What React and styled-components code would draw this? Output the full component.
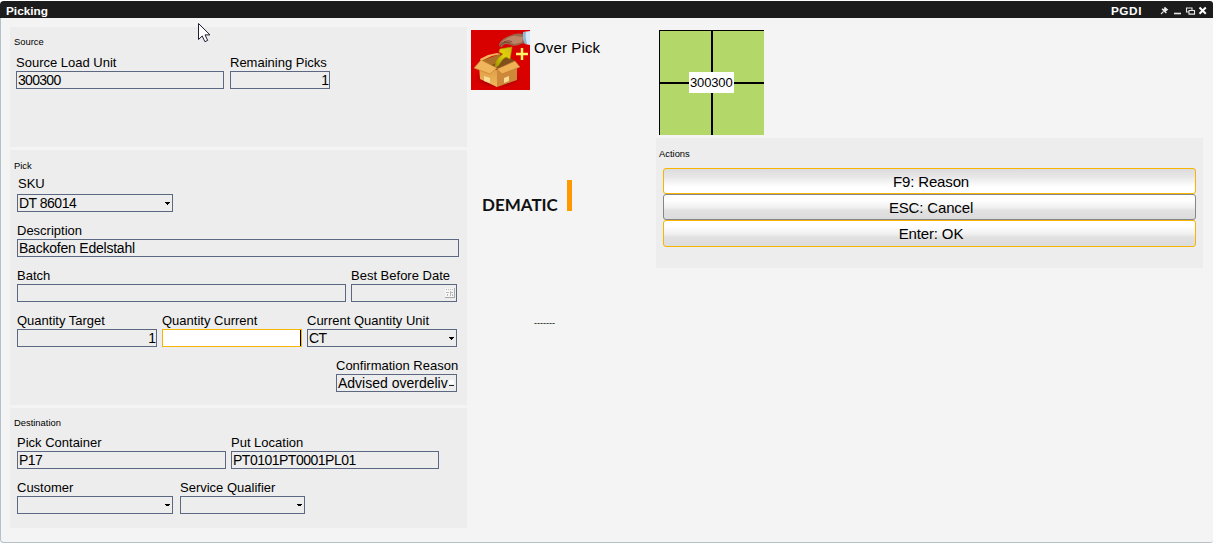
import React from "react";
import styled, { createGlobalStyle } from "styled-components";

const Global = createGlobalStyle`
  * { box-sizing: border-box; }
  html, body { margin: 0; height: 100%; overflow: hidden; background: #fff; }
  body { font-family: "Liberation Sans", Arial, sans-serif; color: #000; }
`;

const Window = styled.div`
  width: 1213px;
  height: 543px;
  padding-top: 1px;
  display: flex;
  flex-direction: column;
`;

const TitleBar = styled.header`
  height: 17px;
  flex: none;
  display: flex;
  align-items: center;
  padding: 3px 5px 0 6px;
  background: #1c1c1c;
  color: #fff;
  border-radius: 4px 3px 0 0;
  font-size: 11.8px;
  font-weight: bold;
  line-height: 14px;
`;

const Title = styled.span`
  flex: 1;
`;

const Station = styled.span`
  letter-spacing: 0.55px;
  margin-right: 18px;
`;

const Body = styled.main`
  flex: 1;
  display: flex;
  align-items: flex-start;
  padding: 9px 9px 0 9px;
  background: #f4f4f4;
  border: solid #b3c1c9;
  border-width: 0 0 1px 1px;
  border-radius: 0 0 3px 4px;
`;

const Column = styled.section`
  display: flex;
  flex-direction: column;
  gap: 3px;
  width: 457px;
`;

const Panel = styled.section`
  height: ${(p) => p.$height}px;
  padding: ${(p) => p.$top || 9}px 7px 0;
  background: #ededed;
`;

const Legend = styled.h2`
  margin: 0 0 ${(p) => p.$gap ?? 6}px ${(p) => p.$indent ?? -3}px;
  font-size: 9.4px;
  font-weight: normal;
  line-height: 12px;
`;

const FieldRow = styled.div`
  display: flex;
  gap: ${(p) => p.$gap ?? 5}px;
  margin-bottom: 11px;
  margin-left: ${(p) => p.$indent || 0}px;
`;

const FieldBlock = styled.label`
  width: ${(p) => p.$width}px;
  display: block;
`;

const Caption = styled.span`
  display: block;
  font-size: 13px;
  line-height: 15px;
  white-space: nowrap;
  padding-left: ${(p) => p.$indent || 0}px;
  margin-bottom: ${(p) => p.$gap ?? 1}px;
`;

const Box = styled.span`
  display: flex;
  align-items: center;
  justify-content: ${(p) => (p.$number ? "flex-end" : "space-between")};
  height: 18px;
  padding: 0 ${(p) => (p.$number ? 0 : 1)}px 0 1px;
  border: 1px solid ${(p) => (p.$active ? "#f7b500" : "#5c6882")};
  background: ${(p) => (p.$active ? "#fff" : "#ededed")};
  font-size: 14px;
  line-height: 16px;
  letter-spacing: ${(p) => p.$spacing || 0}px;
  white-space: nowrap;
`;

const Caret = styled.i`
  width: 1px;
  height: 16px;
  margin-left: auto;
  margin-right: -1px;
  background: #000;
`;

const Dash = styled.i`
  width: 5px;
  height: 7px;
  margin-right: 1px;
  background: linear-gradient(#fff 4px, #ededed 4px, #ededed 5px, #222 5px, #222 6px, #ededed 6px);
`;

const Middle = styled.section`
  width: 189px;
  padding: 3px 0 0 4px;
`;

const Mode = styled.div`
  display: flex;
  gap: 4px;
  font-size: 15px;
  line-height: 18px;
  letter-spacing: 0.13px;
`;

const ModeName = styled.span`
  padding-top: 9px;
`;

const Logo = styled.div`
  display: flex;
  align-items: flex-end;
  justify-content: space-between;
  width: 90px;
  height: 31px;
  margin: 90px 0 0 11px;
  font-family: Lato, sans-serif;
  font-size: 17px;
  font-weight: 700;
  line-height: 13px;
  color: #111;
`;

const LogoBar = styled.i`
  width: 5px;
  height: 31px;
  background: #ff9900;
`;

const Status = styled.div`
  margin: 106px 0 0 63px;
  font-size: 9px;
  line-height: 12px;
`;

const Right = styled.section`
  width: 547px;
  padding-top: 3px;
`;

const LoadGrid = styled.div`
  display: grid;
  grid-template: 51px 51px / 51px 51px;
  gap: 2px;
  width: 105px;
  height: 105px;
  margin: 0 0 3px 3px;
  padding: 0;
  border: 1px solid #000;
  background: #000;
  position: relative;
`;

const Cell = styled.div`
  background: #b4d76a;
`;

const GridLabel = styled.span`
  position: absolute;
  left: 29px;
  top: 41px;
  width: 45px;
  height: 21px;
  background: #fff;
  font-size: 13px;
  line-height: 22px;
  letter-spacing: -0.15px;
  padding-left: 1px;
`;

const ActionList = styled.div`
  display: flex;
  flex-direction: column;
`;

const Action = styled.button`
  height: ${(p) => p.$height || 26}px;
  padding: 1px 0 0 3px;
  border: 1px solid ${(p) => (p.$plain ? "#858585" : "#f7b500")};
  border-radius: 3px;
  background: ${(p) =>
    p.$pressed
      ? "linear-gradient(#dcdcdc 0%, #e6e6e6 30%, #fff 75%)"
      : "linear-gradient(#fff 20%, #f0f0f0 52%, #e1e1e1 65%, #dcdcdc 100%)"};
  color: #000;
  font: 15px/18px "Liberation Sans", Arial, sans-serif;
  letter-spacing: -0.15px;
`;

const Pointer = styled.svg`
  position: absolute;
  left: 197px;
  top: 22px;
`;

const Arrow = ({ small }) => (
  <svg width="7" height="6" viewBox="0 0 7 6" shapeRendering="crispEdges">
    <path d={small ? "M1 2h5v1h-1v1h-3v-1h-1z" : "M1 2h5v1h-1v1h-1v1h-1v-1h-1v-1h-1z"} fill="#000" />
  </svg>
);

const CalendarIcon = () => (
  <svg width="10" height="10" viewBox="0 0 10 10" shapeRendering="crispEdges">
    <path d="M0 0h9v9h-9z" fill="#f5f5f5" />
    <path d="M9 0h1v10h-10v-1h9z" fill="#a8a8a8" />
    <path d="M1 1h1v1h-1zM3 1h1v1h-1zM5 1h1v1h-1zM7 1h1v1h-1zM1 4h3v1h-3zM5 3h1v5h-1zM6 4h2v1h-2zM2 6h1v2h-1zM7 6h1v2h-1z" fill="#b9b9b9" />
  </svg>
);

const WindowIcons = () => (
  <svg width="48" height="12" viewBox="0 0 48 12">
    <g fill="none" stroke="#e8e8e8">
      <path d="M1 9l2.6-2.6" strokeWidth="1.1" />
      <path d="M2 3.8l4.3 4.3" strokeWidth="1.4" />
      <path d="M3.2 4.6l2-1.8 2 2-1.8 2z" fill="#e8e8e8" strokeWidth=".8" />
      <path d="M4.5 2.2l3.4 3" strokeWidth="1.1" />
      <path d="M14 8.5h7" strokeWidth="1.6" />
      <path d="M26.5 3h5.5v4h-5.5z" strokeWidth="1.1" />
      <path d="M29 5.5h5.5v3.6h-5.5z" fill="#1c1c1c" strokeWidth="1.1" />
      <path d="M39.5 2.5l6.3 6.3M45.8 2.5l-6.3 6.3" strokeWidth="2" stroke="#fff" />
    </g>
  </svg>
);

const OverPickIcon = () => (
  <svg width="59" height="60" viewBox="0 0 59 60">
    <defs>
      <linearGradient id="front" x1="0" y1="0" x2="0" y2="1">
        <stop offset="0" stopColor="#dc9b43" />
        <stop offset="1" stopColor="#eeb65c" />
      </linearGradient>
      <linearGradient id="arrow" x1="0" y1="1" x2="1" y2="0">
        <stop offset="0" stopColor="#9d9200" />
        <stop offset=".55" stopColor="#e2d00e" />
        <stop offset="1" stopColor="#cebb09" />
      </linearGradient>
      <radialGradient id="glow">
        <stop offset=".55" stopColor="#8d0000" stopOpacity=".8" />
        <stop offset="1" stopColor="#d60000" stopOpacity="0" />
      </radialGradient>
    </defs>
    <path d="M0 0h59v60h-59z" fill="#d90000" />
    <ellipse cx="27" cy="48" rx="25" ry="11" fill="url(#glow)" />
    <path d="M10 31l19-7 16 7-19 9z" fill="#80501c" />
    <path d="M10 31l19-7v8l-9 3z" fill="#ad7027" />
    <path d="M8 35l18 5v17l-17-8z" fill="url(#front)" />
    <path d="M26 40l20-6v16l-20 7z" fill="#cd8939" />
    <path d="M10 30l-7 8 16 6 7-6z" fill="#f0b65d" stroke="#c67d2c" strokeWidth=".6" />
    <path d="M26 39l18-8 5 6-18 7z" fill="#eeb156" stroke="#bd752a" strokeWidth=".6" />
    <path d="M10 31l11-5 9-2-4-1-9 2-8 4z" fill="#f0b55b" />
    <path d="M13 46l6 2v5l-6-2zM33 48l5-2v5l-5 2z" fill="#f7dc98" />
    <path d="M24 37c1-7 4-10 8-13l-4-2 1-3 12-2-2 12-4-2c-4 2-5 5-8 9z" fill="url(#arrow)" stroke="#ada100" strokeWidth=".6" />
    <path d="M28 16c0-5 5-8 10-10 6-3 10-3 15-2v9c-6 2-9 4-13 2-4-1-7-2-9 2z" fill="#9c684b" />
    <path d="M31 12c5-4 9-6 13-6l8 1-1 5-7 2-6-2z" fill="#bd8767" />
    <path d="M29 16c2-3 5-5 10-3M33 12c4-2 6-1 8 0" fill="none" stroke="#6d3926" strokeWidth=".9" />
    <path d="M52 2l7-1v14l-5-1c-2-4-2-8-2-12z" fill="#d5e8f4" />
    <path d="M52 2l3 0c-1 4 0 8 1 12l-2 0c-2-4-2-8-2-12z" fill="#8fb6d2" />
    <path d="M45 24h12M51 18v12" stroke="#fff36a" strokeWidth="2.5" />
  </svg>
);

const Field = ({ label, width, value, spacing, number, select, small, active, date, dash, captionIndent, captionGap }) => (
  <FieldBlock $width={width}>
    <Caption $indent={captionIndent} $gap={captionGap}>{label}</Caption>
    <Box $number={number} $spacing={spacing} $active={active}>
      <span>{value}</span>
      {select && <Arrow small={small} />}
      {date && <CalendarIcon />}
      {dash && <Dash />}
      {active && <Caret />}
    </Box>
  </FieldBlock>
);

export default function App() {
  return (
    <>
      <Global />
      <Window>
        <TitleBar>
          <Title>Picking</Title>
          <Station>PGDI</Station>
          <WindowIcons />
        </TitleBar>
        <Body>
          <Column>
            <Panel $height={120}>
              <Legend $indent={-3} $gap={7}>Source</Legend>
              <FieldRow $gap={6} $indent={-1}>
                <Field label="Source Load Unit" width={208} value="300300" spacing={-0.7} />
                <Field label="Remaining Picks" width={100} value="1" number />
              </FieldRow>
            </Panel>
            <Panel $height={255} $top={10}>
              <Legend $gap={4}>Pick</Legend>
              <FieldRow>
                <Field label="SKU" width={156} value="DT 86014" spacing={-0.5} select captionIndent={1} captionGap={3} />
              </FieldRow>
              <FieldRow $gap={0}>
                <Field label="Description" width={442} value="Backofen Edelstahl" spacing={-0.22} />
              </FieldRow>
              <FieldRow>
                <Field label="Batch" width={329} />
                <Field label="Best Before Date" width={106} date />
              </FieldRow>
              <FieldRow>
                <Field label="Quantity Target" width={140} value="1" number />
                <Field label="Quantity Current" width={140} active />
                <Field label="Current Quantity Unit" width={150} value="CT" spacing={-0.5} select />
              </FieldRow>
              <FieldRow $indent={319}>
                <Field label="Confirmation Reason" width={121} value="Advised overdeliv" dash />
              </FieldRow>
            </Panel>
            <Panel $height={120}>
              <Legend>Destination</Legend>
              <FieldRow>
                <Field label="Pick Container" width={209} value="P17" spacing={-0.5} />
                <Field label="Put Location" width={208} value="PT0101PT0001PL01" spacing={-0.5} />
              </FieldRow>
              <FieldRow $gap={7}>
                <Field label="Customer" width={156} select small />
                <Field label="Service Qualifier" width={125} select small />
              </FieldRow>
            </Panel>
          </Column>
          <Middle>
            <Mode>
              <OverPickIcon />
              <ModeName>Over Pick</ModeName>
            </Mode>
            <Logo>
              <span>DEMATIC</span>
              <LogoBar />
            </Logo>
            <Status>-------</Status>
          </Middle>
          <Right>
            <LoadGrid>
              <Cell /><Cell /><Cell /><Cell />
              <GridLabel>300300</GridLabel>
            </LoadGrid>
            <Panel $height={130} $top={10}>
              <Legend $indent={-4} $gap={8}>Actions</Legend>
              <ActionList>
                <Action $pressed>F9: Reason</Action>
                <Action $plain>ESC: Cancel</Action>
                <Action $height={27}>Enter: OK</Action>
              </ActionList>
            </Panel>
          </Right>
        </Body>
      </Window>
      <Pointer width="15" height="21" viewBox="0 0 15 21">
        <path d="M1.5 1.5v16l3.7-3.5 2.7 5.7 2.8-1.3-2.7-5.5h5z" fill="#fff" stroke="#202033" strokeWidth="1" />
      </Pointer>
    </>
  );
}
